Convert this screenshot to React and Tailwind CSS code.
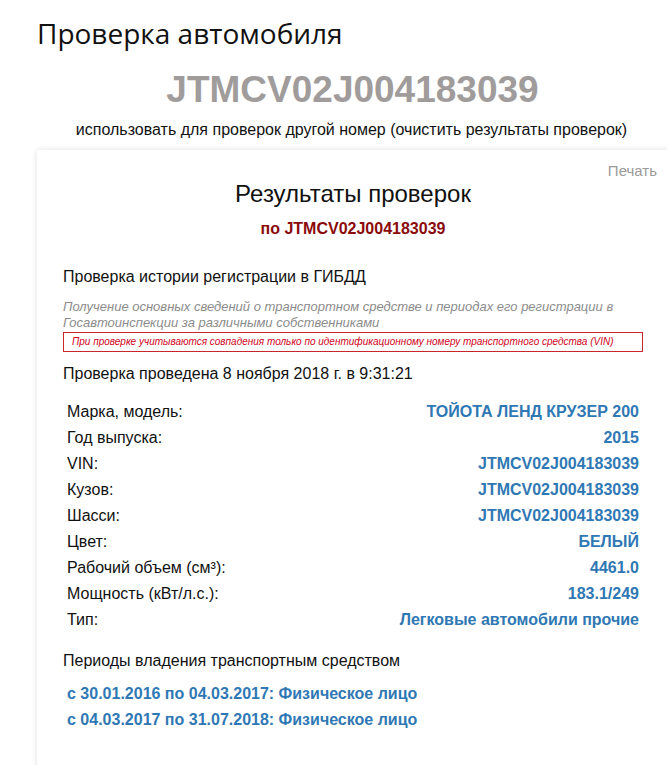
const ROWS = [
  ['Марка, модель:', 'ТОЙОТА ЛЕНД КРУЗЕР 200'],
  ['Год выпуска:', '2015'],
  ['VIN:', 'JTMCV02J004183039'],
  ['Кузов:', 'JTMCV02J004183039'],
  ['Шасси:', 'JTMCV02J004183039'],
  ['Цвет:', 'БЕЛЫЙ'],
  ['Рабочий объем (см³):', '4461.0'],
  ['Мощность (кВт/л.с.):', '183.1/249'],
  ['Тип:', 'Легковые автомобили прочие'],
]

const PERIODS = [
  'с 30.01.2016 по 04.03.2017: Физическое лицо',
  'с 04.03.2017 по 31.07.2018: Физическое лицо',
]

export default function App() {
  return (
    <div className="w-[667px] h-[765px] overflow-hidden bg-white text-[#111] font-['Liberation_Sans',Arial,sans-serif]">
      <h1 className="pl-[37px] pt-[14px] h-[38px] leading-[38px] text-[28px] text-[#111] font-['Open_Sans',sans-serif]">
        Проверка автомобиля
      </h1>

      <div className="mt-[30px] text-center text-[37px] leading-[44px] font-bold text-[#a19c9c] pl-[38px]">
        JTMCV02J004183039
      </div>
      <div className="mt-[8px] text-center text-[16px] leading-[20px] pl-[36px]">
        использовать для проверок другой номер (очистить результаты проверок)
      </div>

      {/* results card, runs off the right edge */}
      <div className="relative mt-[10px] ml-[37px] w-[640px] pt-[30px] pl-[26px] pr-[34px] pb-[60px] bg-white shadow-[0_0_6px_rgba(0,0,0,0.12)]">
        <div className="absolute top-[10px] right-[20px] text-[15px] text-[#9a9a9a]">Печать</div>

        <h2 className="text-center text-[24px] leading-[28px]">Результаты проверок</h2>
        <div className="mt-[11px] text-center text-[16px] leading-[20px] font-bold text-[#8b0a0a]">
          по JTMCV02J004183039
        </div>

        <div className="mt-[28px] text-[16px] leading-[20px]">Проверка истории регистрации в ГИБДД</div>
        <p className="mt-[12px] text-[13px] leading-[16px] italic text-[#8c8c8c]">
          Получение основных сведений о транспортном средстве и периодах его регистрации в Госавтоинспекции за различными собственниками
        </p>
        <div className="mt-[1px] border border-[#c9252c] px-[8px] h-[20px] leading-[18px] text-[10px] italic text-[#d0021b]">
          При проверке учитываются совпадения только по идентификационному номеру транспортного средства (VIN)
        </div>
        <div className="mt-[12px] text-[16px] leading-[20px]">Проверка проведена 8 ноября 2018 г. в 9:31:21</div>

        <div className="mt-[15px] px-[4px] flex flex-col">
          {ROWS.map(([label, value]) => (
            <div key={label} className="flex justify-between items-center h-[26px] text-[16px]">
              <span>{label}</span>
              <span className="font-bold text-[#2f78b4]">{value}</span>
            </div>
          ))}
        </div>

        <div className="mt-[18px] text-[16px] leading-[20px]">Периоды владения транспортным средством</div>
        <div className="mt-[10px] px-[4px] flex flex-col">
          {PERIODS.map((p) => (
            <div key={p} className="h-[26px] leading-[26px] text-[16px] font-bold text-[#2f78b4]">{p}</div>
          ))}
        </div>
      </div>
    </div>
  )
}
